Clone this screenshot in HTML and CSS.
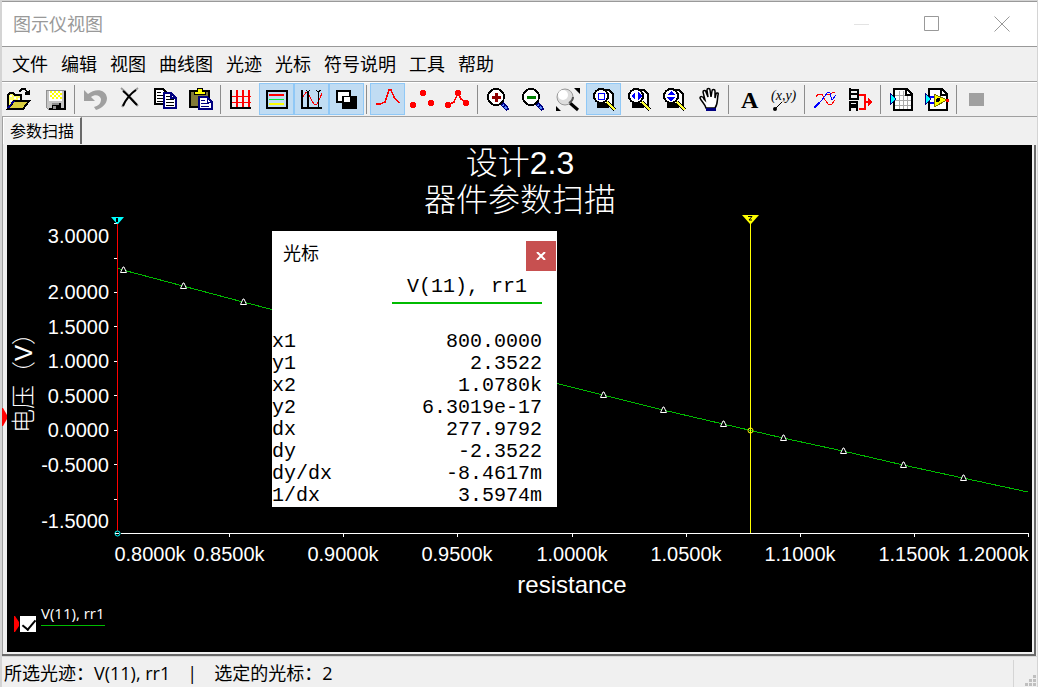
FILE: index.html
```html
<!DOCTYPE html>
<html lang="zh-CN">
<head>
<meta charset="utf-8">
<title>图示仪视图</title>
<link rel="stylesheet" href="styles.css">
</head>
<body>
<div class="window">
  <header class="titlebar">
    <h1 class="title">图示仪视图</h1>
    <button class="caption-btn" aria-label="最小化"><svg width="16" height="16"><path d="M0 8.500h15" stroke="#e3e3e3"/></svg></button>
    <button class="caption-btn" aria-label="最大化"><svg width="16" height="16"><path d="M.5.5h14v14H.5z" fill="none" stroke="#999"/></svg></button>
    <button class="caption-btn" aria-label="关闭"><svg width="16" height="16"><path d="M.5.5l15 15M15.500.5l-15 15" stroke="#999"/></svg></button>
  </header>
  <nav class="menubar">
    <button>文件</button><button>编辑</button><button>视图</button><button>曲线图</button><button>光迹</button><button>光标</button><button>符号说明</button><button>工具</button><button>帮助</button>
  </nav>
  <div class="toolbar">
    <button class="tool" aria-label="打开"><svg viewBox="0 0 35 32" shape-rendering="crispEdges"><path d="M6 25V12l2-2h3l2 2h6v5" fill="#ff6" stroke="#000" stroke-width="1.500"/><path d="M6 26l6-8h15l-6 8z" fill="#d8cc40" stroke="#000" stroke-width="2"/><path d="M6 25l6-7" stroke="#008" stroke-width="2"/><path d="M8 12h2v2H8zm4 2h2v2h-2zm-4 3h2v2H8zm8-2h2v2h-2z" fill="#fff"/><path d="M17 9l3-3h3l3 4" fill="none" stroke="#000" stroke-width="1.500"/><path d="M23 12V9h3l2-3v6z"/></svg></button>
    <button class="tool" aria-label="保存"><svg viewBox="0 0 35 32" shape-rendering="crispEdges"><path d="M9 7h19v19H11l-2-2z" fill="#c4c4c4" stroke="#909090"/><path d="M28 8v18H12" stroke="#000" stroke-width="2" fill="none"/><path d="M12 8h13v10H12z" fill="#fff"/><path d="M13 8h2v2h-2zm4 0h2v2h-2zm4 0h2v2h-2zm-6 2h2v2h-2zm4 0h2v2h-2zm4 0h2v2h-2zm-10 2h2v2h-2zm4 0h2v2h-2zm4 0h2v2h-2zm-6 2h2v2h-2zm4 0h2v2h-2zm4 0h2v2h-2z" fill="#ff0"/><path d="M15 20h9v7h-9z"/><path d="M15 20h7v2h-7zm1 3h3v3h-3z" fill="#909090"/></svg></button>
    <span class="sep"></span>
    <button class="tool" aria-label="撤消"><svg viewBox="0 0 35 32"><path d="M6 7v11h11l-4-4c4-3 9-2 10 2 0 5-3 7-7 8l2 3c6-2 11-6 11-12-1-9-12-10-19-4z" fill="#a0a0a0"/></svg></button>
    <button class="tool" aria-label="删除"><svg viewBox="0 0 35 32"><path d="M8 5c5 4 11 11 17 18M25 5C18 10 13 16 9 24" fill="none" stroke="#999" stroke-width="2"/><path d="M10 8c4 3 9 9 14 14M23 7C17 11 13 16 10 23" fill="none" stroke="#000" stroke-width="2"/></svg></button>
    <button class="tool" aria-label="复制"><svg viewBox="0 0 35 32" shape-rendering="crispEdges"><path d="M7 6h8l4 4v11H7z" fill="#fff" stroke="#000" stroke-width="2"/><path d="M9 9.500h4m-4 3h8m-8 3h8m-8 3h6" stroke="#000"/><path d="M16 10h7l5 5v10H16z" fill="#fff" stroke="#000080" stroke-width="2"/><path d="M18 13.500h4m-4 3h8m-8 3h8m-8 3h8" stroke="#000"/><path d="M23 10v5h5" fill="none" stroke="#000080" stroke-width="2"/></svg></button>
    <button class="tool" aria-label="粘贴"><svg viewBox="0 0 35 32" shape-rendering="crispEdges"><path d="M7 8h19v16H7z" fill="#827a38" stroke="#000" stroke-width="2"/><path d="M11 11V8h3V5h5v3h3v3z" fill="#ff0" stroke="#000"/><path d="M16 14h8l5 5v7H16z" fill="#fff" stroke="#000080" stroke-width="2"/><path d="M18 17.500h4m-4 3h8m-8 3h8M24 14v5h5" fill="none" stroke="#000080"/></svg></button>
    <span class="sep"></span>
    <button class="tool" aria-label="网格"><svg viewBox="0 0 35 32" shape-rendering="crispEdges"><path d="M13 7v19m6-19v19m6-19v19" stroke="#f00" stroke-width="2"/><path d="M7 13.500h20M7 19.500h20" stroke="#f00"/><path d="M7 7v18h20" fill="none" stroke="#000" stroke-width="2"/></svg></button>
    <button class="tool on" aria-label="图例"><svg viewBox="0 0 35 32" shape-rendering="crispEdges"><path d="M8 8h20v17H8z" fill="none" stroke="#000" stroke-width="2"/><path d="M10 12h15" stroke="#f00" stroke-width="2"/><path d="M10 16.500h15" stroke="#0e3"/><path d="M10 21h15" stroke="#ff0" stroke-width="2"/></svg></button>
    <button class="tool on" aria-label="光标"><svg viewBox="0 0 35 32" shape-rendering="crispEdges"><path d="M9 14l3-5 3 3 3 6 2 3h3l3-6 2-5" fill="none" stroke="#f00" stroke-width="1"/><path d="M8 7v18h20" fill="none" stroke="#000" stroke-width="2"/><path d="M14 8v18" stroke="#000" stroke-width="2"/><path d="M24.500 8v17M12 7l2 2 2-2m6 0l2 2 3-2" fill="none" stroke="#000"/></svg></button>
    <button class="tool on" aria-label="反转颜色"><svg viewBox="0 0 35 32" shape-rendering="crispEdges"><path d="M8 8h13v11H8z" fill="#fff" stroke="#000" stroke-width="2"/><path d="M13 13h15v13H13z"/><path d="M15 14h6v5h-6z" fill="#fff"/></svg></button>
    <span class="sep"></span>
    <button class="tool on" aria-label="线"><svg viewBox="0 0 35 32" shape-rendering="crispEdges"><path d="M6 21h4l5-2 3-9 1-3h2l3 7 5 6" fill="none" stroke="#f00" stroke-width="1.500"/></svg></button>
    <button class="tool" aria-label="点"><svg viewBox="0 0 35 32" shape-rendering="crispEdges"><g fill="#f00"><circle cx="8" cy="22" r="3"/><circle cx="18" cy="10" r="3"/><circle cx="26" cy="20" r="3"/></g></svg></button>
    <button class="tool" aria-label="线和点"><svg viewBox="0 0 35 32" shape-rendering="crispEdges"><path d="M8 22l6-3 4-9 3 6 5 4" fill="none" stroke="#f00" stroke-width="1.500"/><g fill="#f00"><circle cx="8" cy="22" r="3"/><circle cx="18" cy="10" r="3"/><circle cx="26" cy="20" r="3"/></g></svg></button>
    <span class="sep"></span>
    <button class="tool" aria-label="放大"><svg viewBox="0 0 35 32" shape-rendering="crispEdges"><path d="M20 19l7 8" stroke="#000080" stroke-width="4"/><path d="M22 22l1 1m1 1l2 2" stroke="#58f" stroke-width="2"/><circle cx="15" cy="14" r="8" fill="#fff" stroke="#000" stroke-width="2"/><path d="M15.500 10v9M11 14.500h9" stroke="#900000" stroke-width="3"/></svg></button>
    <button class="tool" aria-label="缩小"><svg viewBox="0 0 35 32" shape-rendering="crispEdges"><path d="M20 19l7 8" stroke="#000080" stroke-width="4"/><path d="M22 22l1 1m1 1l2 2" stroke="#58f" stroke-width="2"/><circle cx="15" cy="14" r="8" fill="#fff" stroke="#000" stroke-width="2"/><path d="M11 14.500h9" stroke="#008000" stroke-width="3"/></svg></button>
    <button class="tool" aria-label="恢复图表"><svg viewBox="0 0 35 32"><path d="M19 20l8 7" stroke="#000" stroke-width="3"/><circle cx="14" cy="14" r="8" fill="#ddd" stroke="#999"/><circle cx="12" cy="12" r="5" fill="#fff"/><path d="M18 20c3-2 4-4 4-6" fill="none" stroke="#555" stroke-width="2"/><path d="M23 5h6v6zM5 23v5h5z"/></svg></button>
    <button class="tool on" aria-label="区域缩放"><svg viewBox="0 0 35 32" shape-rendering="crispEdges"><path d="M12 7h11l4 4v12H12z" fill="#fff" stroke="#000" stroke-width="2"/><path d="M11 22h12" stroke="#000" stroke-width="5"/><circle cx="15" cy="13" r="7" fill="#fff" stroke="#000" stroke-width="2"/><path d="M21 19l8 8" stroke="#000" stroke-width="4"/><path d="M21 19l8 8" stroke="#ff3" stroke-width="2"/><path d="M12.500 10.500h6v6h-6z" fill="none" stroke="#00f"/></svg></button>
    <button class="tool" aria-label="水平缩放"><svg viewBox="0 0 35 32" shape-rendering="crispEdges"><path d="M12 7h11l4 4v12H12z" fill="#fff" stroke="#000" stroke-width="2"/><path d="M11 22h12" stroke="#000" stroke-width="5"/><circle cx="15" cy="13" r="7" fill="#fff" stroke="#000" stroke-width="2"/><path d="M21 19l8 8" stroke="#000" stroke-width="4"/><path d="M21 19l8 8" stroke="#ff3" stroke-width="2"/><path d="M10 13l4-4v8zm11 0l-4-4v8z" fill="#00f"/></svg></button>
    <button class="tool" aria-label="垂直缩放"><svg viewBox="0 0 35 32" shape-rendering="crispEdges"><path d="M12 7h11l4 4v12H12z" fill="#fff" stroke="#000" stroke-width="2"/><path d="M11 22h12" stroke="#000" stroke-width="5"/><circle cx="15" cy="13" r="7" fill="#fff" stroke="#000" stroke-width="2"/><path d="M21 19l8 8" stroke="#000" stroke-width="4"/><path d="M21 19l8 8" stroke="#ff3" stroke-width="2"/><path d="M15 8l4 4h-8zm0 11l4-5h-8z" fill="#00f"/></svg></button>
    <button class="tool" aria-label="平移"><svg viewBox="0 0 35 32"><path d="M15 25c-1-4-5-7-6-10 0-2 3-2 4 1l1 1-2-8c0-2 3-2 3 0l2 5-1-7c0-2 3-2 3 0l1 7 1-6c0-2 3-2 3 0v7l1-4c1-2 3-1 2 1-1 5 0 9-3 13z" fill="#fff" stroke="#000" stroke-width="1.500"/><path d="M15 25h10v3H15z" fill="#000080"/></svg></button>
    <span class="sep"></span>
    <button class="tool" aria-label="添加文本"><svg viewBox="0 0 35 32"><text x="9" y="25" class="glyph-a">A</text></svg></button>
    <button class="tool" aria-label="数据标签"><svg viewBox="0 0 35 32"><path d="M8 26l7-7" stroke="#000"/><circle cx="8" cy="26" r="2"/><text x="4" y="17" class="glyph-xy">(x,y)</text></svg></button>
    <span class="sep"></span>
    <button class="tool" aria-label="叠加光迹"><svg viewBox="0 0 35 32" shape-rendering="crispEdges"><path d="M8 14l2-3h4l3 6 3 4h4l3-4M19 12l8-3" fill="none" stroke="#f00"/><path d="M6 25l7-7 7-9 2 1 2 7 4-5" fill="none" stroke="#00f"/><path d="M6 25l5-5" stroke="#00f" stroke-width="2"/></svg></button>
    <button class="tool" aria-label="光标合并"><svg viewBox="0 0 35 32" shape-rendering="crispEdges"><path d="M7 5v11h8V7H7m0 4h8M7 28V19h7v3H8m6 0v6m-7-4h8" fill="none" stroke="#000" stroke-width="2"/><path d="M16 12h6v14h-6M22 19h4" fill="none" stroke="#f00" stroke-width="2"/><path d="M25 15l5 4-5 4z" fill="#f00"/></svg></button>
    <span class="sep"></span>
    <button class="tool" aria-label="导出到表格"><svg viewBox="0 0 35 32" shape-rendering="crispEdges"><path d="M10 6h13l5 5v16H10z" fill="#fff" stroke="#000" stroke-width="2"/><path d="M15.500 8v18m4-18v18m4-14v14M11 12.500h16m-16 5h16m-16 5h16" stroke="#aaa" stroke-width="1"/><path d="M22 6v6h6" fill="none" stroke="#000" stroke-width="2"/><path d="M6 10l6 6-6 6z" fill="#0ff" stroke="#000080"/></svg></button>
    <button class="tool" aria-label="导出到测量文件"><svg viewBox="0 0 35 32" shape-rendering="crispEdges"><path d="M10 6h13l5 5v16H10z" fill="#fff" stroke="#000" stroke-width="2"/><path d="M22 6v6h6" fill="none" stroke="#000" stroke-width="2"/><path d="M11 14h5m-5 6h5" stroke="#00f" stroke-width="2"/><path d="M15 11l13 6-13 7z" fill="#ff0" stroke="#777000"/><circle cx="19" cy="17" r="2"/><path d="M27 16h3v3h-3z" fill="#f00"/><path d="M6 10l6 6-6 6z" fill="#0ff" stroke="#000080"/></svg></button>
    <span class="sep"></span>
    <button class="tool" aria-label="停止" disabled><svg viewBox="0 0 35 32"><path d="M9 10h15v13H9z" fill="#a0a0a0"/></svg></button>
  </div>
  <div class="tabs"><button class="tab">参数扫描</button></div>
  <main class="pane">
    <svg class="marker" viewBox="0 0 5 18"><path d="M0 0h1l4 7v4l-4 7H0z" fill="#f00"/></svg>
    <div class="plot">
      <svg class="chart" viewBox="7 145 1025 507">
        <defs>
          <path id="pt" d="M-3 2.500h6L.5-3h-1z" fill="#000" stroke="#fff"/>
        </defs>
        <g class="heading" text-anchor="middle"><text x="520" y="174">设计2.3</text><text x="520" y="211">器件参数扫描</text></g>
        <text class="ylabel" transform="translate(32 433) rotate(-90)">电压（V）</text>
        <g class="axis" text-anchor="end">
          <text x="109" y="243">3.0000</text><text x="109" y="299">2.0000</text><text x="109" y="334">1.5000</text><text x="109" y="368">1.0000</text><text x="109" y="403">0.5000</text><text x="109" y="437">0.0000</text><text x="109" y="472">-0.5000</text><text x="109" y="528">-1.5000</text>
        </g>
        <g class="axis" text-anchor="middle">
          <text x="150" y="561">0.8000k</text><text x="229" y="561">0.8500k</text><text x="343" y="561">0.9000k</text><text x="457" y="561">0.9500k</text><text x="572" y="561">1.0000k</text><text x="686" y="561">1.0500k</text><text x="800" y="561">1.1000k</text><text x="914" y="561">1.1500k</text><text x="993" y="561">1.2000k</text>
        </g>
        <text class="xlabel" x="572" y="593" text-anchor="middle">resistance</text>
        <g shape-rendering="crispEdges" fill="none">
          <path stroke="#fff" d="M114 223.500h3m-3 35h3m-3 34h3m-3 34h3m-3 35h3m-3 34h3m-3 35h3m-3 34h3m-3 35h3M121 533.500h908M229.500 533v4m114-4v4m114-4v4m115-4v4m114-4v4m114-4v4m114-4v4m114-4v4"/>
          <path stroke="#f00" d="M117.500 223v308"/>
          <path stroke="#0b0" d="M118 268.500l5 1.500 60 16 60 16 60 15.500 60 16 60 16 60 15.500 60 15 60 15 60 15 60 14 60 14 60 13 60 14 60 13 65 14"/>
          <path stroke="#ff0" d="M750.500 222v311"/>
        </g>
        <use href="#pt" x="123.500" y="270"/><use href="#pt" x="183.500" y="286"/><use href="#pt" x="243.500" y="302"/><use href="#pt" x="603.500" y="395"/><use href="#pt" x="663.500" y="410"/><use href="#pt" x="723.500" y="424"/><use href="#pt" x="783.500" y="438"/><use href="#pt" x="843.500" y="451"/><use href="#pt" x="903.500" y="465"/><use href="#pt" x="963.500" y="478"/>
        <path d="M111 217h13l-6 7h-1z" fill="#0ff"/><path d="M116 218h2v4h-2z" fill="#000"/>
        <path d="M742 215h17l-8 9h-1z" fill="#ff0"/><path d="M748 216.500h4l-3 3.500h3" fill="none" stroke="#000"/>
        <circle cx="117.500" cy="533.500" r="2.500" fill="none" stroke="#0ff"/><path d="M115 533.500h4" stroke="#fff"/>
        <circle cx="750.500" cy="430.500" r="2.500" fill="none" stroke="#ff0"/>
      </svg>
      <div class="legend">
        <svg class="legend-arrow" viewBox="0 0 5 16"><path d="M0 0h1l4 6v4l-4 6H0z" fill="#f00"/></svg>
        <input type="checkbox" id="trace" class="legend-check" checked>
        <label for="trace" class="legend-name">V(11), rr1</label>
      </div>
      <section class="dialog">
        <div class="dialog-head"><h2 class="dialog-title">光标</h2><button class="dialog-close" aria-label="关闭光标"><svg width="10" height="8"><path d="M1 0l8 8M9 0L1 8" stroke="#fff" stroke-width="2"/></svg></button></div>
        <table class="readout">
          <thead><tr><td></td><th scope="col"><span class="trace-name">V(11), rr1</span></th></tr></thead>
          <tbody>
            <tr><th scope="row">x1</th><td>800.0000</td></tr>
            <tr><th scope="row">y1</th><td>2.3522</td></tr>
            <tr><th scope="row">x2</th><td>1.0780k</td></tr>
            <tr><th scope="row">y2</th><td>6.3019e-17</td></tr>
            <tr><th scope="row">dx</th><td>277.9792</td></tr>
            <tr><th scope="row">dy</th><td>-2.3522</td></tr>
            <tr><th scope="row">dy/dx</th><td>-8.4617m</td></tr>
            <tr><th scope="row">1/dx</th><td>3.5974m</td></tr>
          </tbody>
        </table>
      </section>
    </div>
  </main>
  <footer class="status">
    <span>所选光迹：V(11), rr1</span><span>|</span><span>选定的光标：2</span>
    <svg class="grip" width="24" height="30" shape-rendering="crispEdges"><path d="M.5 2v27" stroke="#d5d5d5"/><path d="M20 17h3v3h-3zm-4 4h3v3h-3zm4 0h3v3h-3zm-8 4h3v3h-3zm4 0h3v3h-3zm4 0h3v3h-3z" fill="#bfbfbf"/></svg>
  </footer>
</div>
</body>
</html>
```
FILE: styles.css
```css
* { box-sizing: border-box; }

body {
  margin: 0;
  height: 100vh;
  padding: 1px 1px 0 2px;
  background: #d4d4d4;
  color: #000;
  font: 18px/24px "Open Sans", "Noto Sans CJK SC", sans-serif;
}

button {
  margin: 0;
  padding: 0;
  border: 0;
  background: none;
  color: inherit;
  font: inherit;
}

.window {
  display: flex;
  flex-direction: column;
  height: 100%;
  background: #f0f0f0;
  border-top: 1px solid #999;
}

.titlebar {
  display: flex;
  align-items: center;
  height: 45px;
  padding-left: 11px;
  background: #fff;
  border-bottom: 1px solid #999;
}

.title {
  flex: 1;
  margin: 0;
  color: #999;
  font-size: 18px;
  font-weight: 400;
}

.caption-btn {
  display: flex;
  align-items: center;
  justify-content: center;
  width: 70px;
  height: 44px;
}

.menubar {
  display: flex;
  align-items: center;
  gap: 13px;
  height: 35px;
  padding-left: 10px;
  border-bottom: 1px solid #a0a0a0;
}

.toolbar {
  display: flex;
  height: 35px;
  border-top: 1px solid #fff;
  border-bottom: 1px solid #a0a0a0;
}

.tool {
  flex: none;
  width: 35px;
  height: 32px;
}

.tool svg { display: block; width: 35px; height: 32px; }

.tool.on {
  background: #c0dcf3;
  box-shadow: inset 0 0 0 1px #90c8f6;
}

.sep {
  flex: none;
  width: 6px;
  padding: 2px;
}

.sep::before {
  content: "";
  display: block;
  width: 1px;
  height: 29px;
  background: #8c8c8c;
}

.glyph-a { font: bold 24px "Liberation Serif", serif; }
.glyph-xy { font: italic 14px "Liberation Serif", serif; }

.tabs {
  height: 28px;
  border-left: 1px solid #a0a0a0;
}

.tab {
  display: block;
  height: 27px;
  padding: 0 6px;
  border-right: 2px solid #696969;
  border-left: 1px solid #fff;
  border-top: 1px solid #fff;
  font-size: 16px;
  line-height: 24px;
}

.pane {
  display: flex;
  flex: 1;
  align-items: center;
  min-height: 0;
  border: solid #696969;
  border-width: 0 2px 2px 0;
  margin-right: 1px;
  padding: 0 2px 2px 0;
  box-shadow: inset 1px 0 #a0a0a0;
}

.marker { width: 5px; height: 18px; margin-top: 36px; }

.plot {
  position: relative;
  flex: 1;
  height: 100%;
  min-width: 0;
  background: #000;
  color: #fff;
}

.chart { display: block; width: 100%; height: 100%; fill: #fff; }
.heading { font: 32px "Liberation Sans", "Noto Sans CJK SC", sans-serif; font-weight: 300; }
.axis { font: 20px "Liberation Sans", sans-serif; }
.xlabel, .ylabel { font: 24px "Liberation Sans", "Noto Sans CJK SC", sans-serif; }
.ylabel { font-weight: 300; }

.legend {
  position: absolute;
  left: 7px;
  bottom: 20px;
  display: flex;
  align-items: flex-end;
  font-size: 15px;
}

.legend-arrow { width: 5px; height: 16px; }

.legend-check {
  appearance: none;
  width: 16px;
  height: 16px;
  margin: 0 5px 0 1px;
  padding: 1px 5px;
  background: #fff;
}

.legend-check:checked::before {
  content: "";
  display: block;
  width: 6px;
  height: 11px;
  border: solid #000;
  border-width: 0 2px 2px 0;
  transform: rotate(40deg);
}

.legend-name {
  margin-bottom: 6px;
  border-bottom: 1px solid #0b0;
}

.dialog {
  position: absolute;
  left: 265px;
  top: 86px;
  width: 285px;
  background: #fff;
  color: #000;
}

.dialog-head {
  display: flex;
  justify-content: space-between;
  align-items: flex-end;
  height: 40px;
  padding: 0 1px 0 11px;
}

.dialog-title {
  align-self: center;
  margin: 3px 0 0;
  font-size: 18px;
  font-weight: 400;
}

.dialog-close {
  display: flex;
  align-items: center;
  justify-content: center;
  width: 30px;
  height: 30px;
  background: #c75050;
}

.readout {
  width: 270px;
  border-collapse: collapse;
  font: 20px/22px "Liberation Mono", monospace;
}

.readout td, .readout th { height: 22px; padding: 0; font-weight: 400; }
.readout tbody th { text-align: left; }
.readout td { text-align: right; }
.readout thead th { height: 60px; text-align: right; vertical-align: top; }

.trace-name {
  display: inline-block;
  padding: 5px 15px 4px;
  border-bottom: 2px solid #0b0;
}

.status {
  display: flex;
  align-items: center;
  gap: 17px;
  height: 31px;
  padding: 2px 0 0 2px;
  border-top: 1px solid #d8d8d8;
}

.grip { margin-left: auto; }
```
